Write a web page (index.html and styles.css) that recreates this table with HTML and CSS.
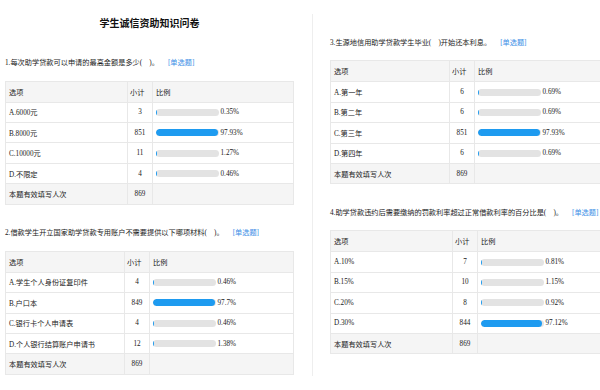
FILE: index.html
```html
<!DOCTYPE html>
<html lang="zh-CN">
<head>
<meta charset="utf-8">
<title>学生诚信资助知识问卷</title>
<link rel="stylesheet" href="styles.css">
</head>
<body>
<div class="page">
  <section class="panel panel-left">
    <h1 class="title">学生诚信资助知识问卷</h1>

    <div class="question">
      <p class="q-text">1.每次助学贷款可以申请的最高金额是多少(&ensp;&ensp;)。<span class="q-type">[单选题]</span></p>
      <table class="result result-left">
        <colgroup><col class="c-opt-wide"><col class="c-num"><col></colgroup>
        <tr class="head"><th>选项</th><th class="h-num">小计</th><th>比例</th></tr>
        <tr><td>A.6000元</td><td class="num">3</td><td><div class="ratio"><span class="bar"><span class="fill" style="width:0.35%"></span></span><span class="pct">0.35%</span></div></td></tr>
        <tr><td>B.8000元</td><td class="num">851</td><td><div class="ratio"><span class="bar"><span class="fill" style="width:97.93%"></span></span><span class="pct">97.93%</span></div></td></tr>
        <tr><td>C.10000元</td><td class="num">11</td><td><div class="ratio"><span class="bar"><span class="fill" style="width:1.27%"></span></span><span class="pct">1.27%</span></div></td></tr>
        <tr><td>D.不限定</td><td class="num">4</td><td><div class="ratio"><span class="bar"><span class="fill" style="width:0.46%"></span></span><span class="pct">0.46%</span></div></td></tr>
        <tr class="total"><td>本题有效填写人次</td><td class="num">869</td><td></td></tr>
      </table>
    </div>

    <div class="question">
      <p class="q-text">2.借款学生开立国家助学贷款专用账户不需要提供以下哪项材料(&ensp;&ensp;)。<span class="q-type">[单选题]</span></p>
      <table class="result result-left">
        <colgroup><col class="c-opt-narrow"><col class="c-num"><col></colgroup>
        <tr class="head"><th>选项</th><th class="h-num">小计</th><th>比例</th></tr>
        <tr><td>A.学生个人身份证复印件</td><td class="num">4</td><td><div class="ratio"><span class="bar"><span class="fill" style="width:0.46%"></span></span><span class="pct">0.46%</span></div></td></tr>
        <tr><td>B.户口本</td><td class="num">849</td><td><div class="ratio"><span class="bar"><span class="fill" style="width:97.7%"></span></span><span class="pct">97.7%</span></div></td></tr>
        <tr><td>C.银行卡个人申请表</td><td class="num">4</td><td><div class="ratio"><span class="bar"><span class="fill" style="width:0.46%"></span></span><span class="pct">0.46%</span></div></td></tr>
        <tr><td>D.个人银行结算账户申请书</td><td class="num">12</td><td><div class="ratio"><span class="bar"><span class="fill" style="width:1.38%"></span></span><span class="pct">1.38%</span></div></td></tr>
        <tr class="total"><td>本题有效填写人次</td><td class="num">869</td><td></td></tr>
      </table>
    </div>
  </section>

  <section class="panel panel-right">
    <div class="question">
      <p class="q-text">3.生源地信用助学贷款学生毕业(&ensp;&ensp;)开始还本利息。<span class="q-type">[单选题]</span></p>
      <table class="result result-right">
        <colgroup><col class="c-opt-narrow"><col class="c-num"><col></colgroup>
        <tr class="head"><th>选项</th><th class="h-num">小计</th><th>比例</th></tr>
        <tr><td>A.第一年</td><td class="num">6</td><td><div class="ratio"><span class="bar"><span class="fill" style="width:0.69%"></span></span><span class="pct">0.69%</span></div></td></tr>
        <tr><td>B.第二年</td><td class="num">6</td><td><div class="ratio"><span class="bar"><span class="fill" style="width:0.69%"></span></span><span class="pct">0.69%</span></div></td></tr>
        <tr><td>C.第三年</td><td class="num">851</td><td><div class="ratio"><span class="bar"><span class="fill" style="width:97.93%"></span></span><span class="pct">97.93%</span></div></td></tr>
        <tr><td>D.第四年</td><td class="num">6</td><td><div class="ratio"><span class="bar"><span class="fill" style="width:0.69%"></span></span><span class="pct">0.69%</span></div></td></tr>
        <tr class="total"><td>本题有效填写人次</td><td class="num">869</td><td></td></tr>
      </table>
    </div>

    <div class="question">
      <p class="q-text">4.助学贷款违约后需要缴纳的罚款利率超过正常借款利率的百分比是(&ensp;&ensp;)。<span class="q-type">[单选题]</span></p>
      <table class="result result-right">
        <colgroup><col class="c-opt-wide"><col class="c-num"><col></colgroup>
        <tr class="head"><th>选项</th><th class="h-num">小计</th><th>比例</th></tr>
        <tr><td>A.10%</td><td class="num">7</td><td><div class="ratio"><span class="bar"><span class="fill" style="width:0.81%"></span></span><span class="pct">0.81%</span></div></td></tr>
        <tr><td>B.15%</td><td class="num">10</td><td><div class="ratio"><span class="bar"><span class="fill" style="width:1.15%"></span></span><span class="pct">1.15%</span></div></td></tr>
        <tr><td>C.20%</td><td class="num">8</td><td><div class="ratio"><span class="bar"><span class="fill" style="width:0.92%"></span></span><span class="pct">0.92%</span></div></td></tr>
        <tr><td>D.30%</td><td class="num">844</td><td><div class="ratio"><span class="bar"><span class="fill" style="width:97.12%"></span></span><span class="pct">97.12%</span></div></td></tr>
        <tr class="total"><td>本题有效填写人次</td><td class="num">869</td><td></td></tr>
      </table>
    </div>
  </section>
</div>
</body>
</html>
```

FILE: styles.css
```css
* { box-sizing: border-box; }

html, body {
  margin: 0;
  width: 600px;
  height: 390px;
  overflow: hidden;
  background: #fff;
}

body {
  font-family: "Liberation Serif", "Noto Sans CJK SC", serif;
  font-size: 7.2px;
  color: #1a1a1a;
}

.page {
  display: flex;
  align-items: flex-start;
}

.panel-left {
  flex: none;
  width: 312px;
  padding-left: 5px;
}

.panel-right {
  flex: none;
  width: 300px;
  height: 362px;
  margin-top: 14px;
  border-left: 1px solid #eeeeee;
  padding-left: 17px;
  padding-top: 22.7px;
}

.title {
  width: 289px;
  margin: 16px 0 27px;
  text-align: center;
  font-family: "Noto Sans CJK SC", sans-serif;
  font-size: 10px;
  line-height: 14px;
  font-weight: bold;
  color: #111;
}

.q-text {
  margin: 0 0 11.7px;
  line-height: 12px;
  white-space: nowrap;
}

.q-type {
  margin-left: 9px;
  color: #3a8ee6;
}

.question + .question {
  margin-top: 22.4px;
}

.result {
  border-collapse: collapse;
  table-layout: fixed;
  border: 1px solid #e6e6e6;
}

.result-left { width: 289px; }
.result-right { width: 290px; }

.c-opt-wide { width: 122px; }
.c-opt-narrow { width: 119px; }
.c-num { width: 25px; }

.result tr { height: 20.4px; }
.result tr.head { height: 21px; }

.result th,
.result td {
  border: 1px solid #e8e8e8;
  padding: 0 3px;
  text-align: left;
  font-weight: normal;
  vertical-align: middle;
  white-space: nowrap;
  background: #fff;
}

.result .head th,
.result .total td {
  background: #f5f5f5;
}

.result th.h-num {
  padding: 0 2px;
}

.result td.num {
  text-align: center;
  padding: 0;
}

.ratio {
  display: flex;
  align-items: center;
}

.bar {
  flex: none;
  display: block;
  width: 63px;
  height: 7px;
  border-radius: 4px;
  background: #e3e3e3;
  overflow: hidden;
}

.fill {
  display: block;
  height: 100%;
  background: #1e9bf0;
  border-radius: 4px;
}

.pct {
  margin-left: 1.5px;
}
```
